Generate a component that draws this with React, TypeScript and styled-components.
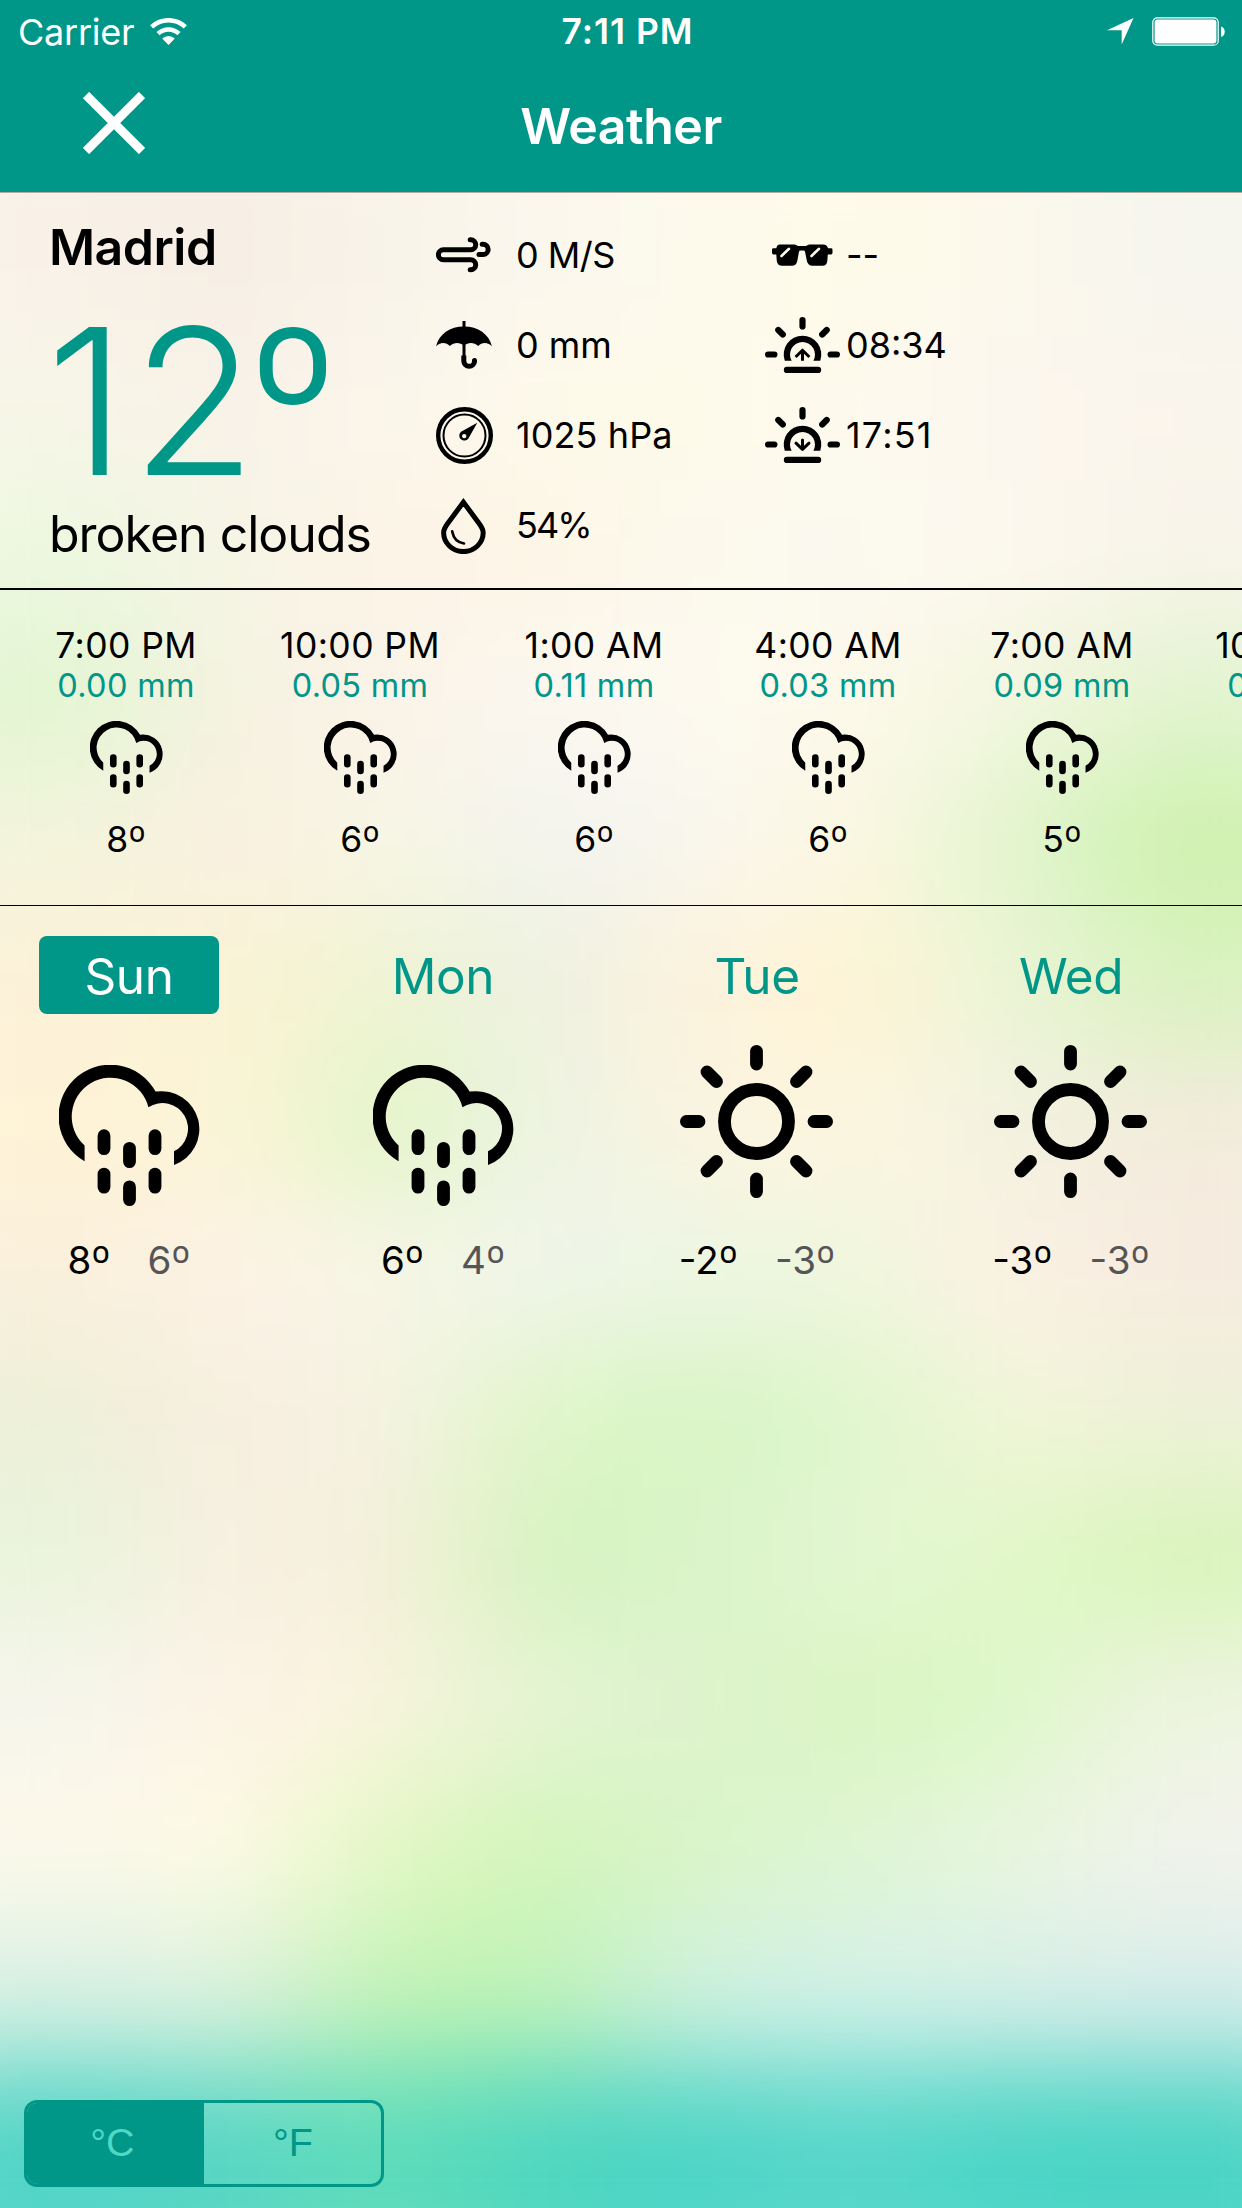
import React from "react";
import styled, { createGlobalStyle } from "styled-components";

const TEAL = "#009688";

const GlobalStyle = createGlobalStyle`
  * { box-sizing: border-box; }
  html, body { margin: 0; padding: 0; }
  body { font-family: Inter, "Liberation Sans", sans-serif; color: #000; }
`;

const Screen = styled.div`
  position: relative;
  width: 1242px;
  height: 2208px;
  overflow: hidden;
  display: flex;
  flex-direction: column;
  isolation: isolate;
`;

/* Soft, out-of-focus backdrop */
const Backdrop = styled.div`
  position: absolute;
  inset: 92px -100px -100px -100px;
  z-index: -1;
  display: flex;
  flex-direction: column;
  filter: blur(54px);
`;

const Band = styled.div<{ $colors: string[] }>`
  flex: 0 0 144px;
  background: linear-gradient(
    90deg,
    ${(p) => p.$colors.map((c, i) => `${c} ${178 + i * 155}px`).join(", ")}
  );
  &:first-child { flex-basis: 244px; }
  &:last-child { flex-basis: 244px; }
`;

const bands = [
  "#f9f1e8 #f6eee4 #f8f4e9 #fbf7ee #fdfaec #fefbe9 #fcf8ec #f6f5ee",
  "#f7f6e8 #f9f1e8 #fbf6ec #fdfaea #fefaea #fdfaee #fcf7ee #fbf5ec",
  "#edf7e0 #f6f5e6 #fcf3e6 #fdf6e6 #fcf9ec #fbf9f0 #fdf8ee #f8f4ea",
  "#e2f6d2 #f6f2e2 #fbf3e8 #fbf7f0 #fdfaf0 #fdf9ea #f4f6e0 #e2f4d0",
  "#f3f4dc #faf0e0 #f7f6e4 #f3f3ee #f8f6ee #fdf8e2 #e2f5d0 #cef2ae",
  "#fcf1d8 #fbf3d4 #eef4d2 #edf1e2 #fdf2dc #fff4d4 #ebf5d8 #daf2c0",
  "#fef3d6 #fcf4d8 #e0f6c6 #eef3e4 #faf4e0 #fdf6e0 #f2f2e0 #f3ebdc",
  "#faf0dc #fdf2e6 #f7f6e6 #f0f5ea #ecf6e4 #f0f7dc #fcf1e4 #f6ece0",
  "#edf0d8 #f8eee0 #f5f3e2 #dff6c8 #d8f5c4 #def6ce #f2f6d8 #eef1d8",
  "#eaf4dc #f8f0e2 #f5f0da #d4f3be #daf4c8 #e4f6d4 #e2f8c8 #d8f5ba",
  "#f6f5ec #fef3e6 #f8f4dc #e4f4d4 #def3ce #daf5c0 #dcf8c8 #eef4e0",
  "#fdf9ea #fefae4 #e4f8c4 #d2f5ba #daf5c8 #dff5d4 #e8f6de #f2f3ec",
  "#daf1e4 #def2de #c2f3b4 #bef3b6 #d2f0e2 #d4f2e8 #d8efe8 #d8edea",
  "#50d4c6 #58d6c4 #5eddb8 #4ed6c0 #4cd4c6 #58d7ca #4ad5c6 #4ad4c4",
].map((row) => row.split(" "));

const Header = styled.header`
  flex: none;
  height: 193px;
  background: ${TEAL};
  border-bottom: 1px solid #b3aaa0;
  color: #fff;
`;

const StatusBar = styled.div`
  height: 60px;
  padding: 2px 17px 0 18px;
  display: grid;
  grid-template-columns: 1fr auto 1fr;
  align-items: center;
  font-size: 36px;
  line-height: 58px;
`;

const StatusSide = styled.div<{ $end?: boolean }>`
  display: flex;
  align-items: center;
  justify-content: ${(p) => (p.$end ? "flex-end" : "flex-start")};
  gap: ${(p) => (p.$end ? 18 : 16)}px;
`;

const Carrier = styled.span`
  letter-spacing: -0.25px;
`;

const Clock = styled.span`
  padding: 1px 0 0 12px;
  font-size: 35.5px;
  font-weight: 600;
  letter-spacing: 1px;
`;

const NavBar = styled.div`
  height: 132px;
  padding-left: 83px;
  display: grid;
  grid-template-columns: 62px 1fr 145px;
  align-items: center;
`;

const CloseButton = styled.button`
  width: 62px;
  height: 62px;
  margin-top: -6px;
  padding: 0;
  border: 0;
  background: none;
  color: inherit;
  display: flex;
`;

const Title = styled.h1`
  margin: 0;
  text-align: center;
  font-size: 50px;
  font-weight: 600;
  line-height: 60px;
  letter-spacing: -0.5px;
`;

const Current = styled.section`
  flex: none;
  height: 397px;
  border-bottom: 2px solid #000;
  padding: 17px 0 0 49px;
  display: flex;
`;

const Summary = styled.div`
  width: 377px;
  padding-top: 7px;
  display: flex;
  flex-direction: column;
  white-space: nowrap;
`;

const City = styled.h2`
  margin: 0;
  font-size: 50px;
  font-weight: 600;
  line-height: 60px;
  letter-spacing: -0.5px;
`;

const BigTemp = styled.div`
  margin: 21px 0 0 -3px;
  font-size: 204px;
  font-weight: 345;
  line-height: 206px;
  letter-spacing: 5px;
  color: ${TEAL};
`;

const BigDegree = styled.span`
  margin-left: -12px;
  font-size: 202px;
  font-weight: 275;
  line-height: 0;
  vertical-align: 2px;
`;

const Degree = styled.span`
  font-size: 1.16em;
  font-weight: 330;
  line-height: 0;
  vertical-align: -0.1em;
`;

const Condition = styled.div`
  font-size: 50px;
  line-height: 60px;
  letter-spacing: -1px;
`;

const MetricColumn = styled.div<{ $gap: number }>`
  width: 338px;
  display: grid;
  grid-auto-rows: 90px;
  align-content: start;
  --gap: ${(p) => p.$gap}px;
`;

const Metric = styled.div<{ $tracking?: number }>`
  display: grid;
  grid-template-columns: 76px auto;
  column-gap: var(--gap);
  align-items: center;
  justify-content: start;
  font-size: 36px;
  font-weight: 375;
  letter-spacing: ${(p) => p.$tracking ?? 0}px;
  white-space: nowrap;
`;

const MetricIcon = styled.span`
  display: flex;
  justify-content: center;
`;

const Hourly = styled.section`
  flex: none;
  height: 316px;
  border-bottom: 1px solid #000;
  padding: 37px 0 0 9px;
  display: flex;
`;

const Hour = styled.div`
  flex: 0 0 234px;
  display: flex;
  flex-direction: column;
  align-items: center;
  font-weight: 375;
  white-space: nowrap;
`;

const HourTime = styled.div`
  font-size: 35.5px;
  line-height: 37px;
  letter-spacing: 0.4px;
`;

const HourRain = styled.div`
  margin-top: 1px;
  font-size: 32.5px;
  line-height: 42px;
  letter-spacing: 0.3px;
  color: ${TEAL};
`;

const HourIcon = styled.div`
  margin-top: 14px;
  height: 73px;
`;

const HourTemp = styled.div`
  margin-top: 26px;
  font-size: 35.5px;
  line-height: 40px;
`;

const Daily = styled.section`
  flex: none;
  padding: 30px 0 0 39px;
  display: flex;
  gap: 134px;
`;

const Day = styled.div`
  flex: 0 0 180px;
  display: flex;
  flex-direction: column;
  align-items: center;
`;

const DayName = styled.button<{ $active?: boolean }>`
  width: 180px;
  height: 78px;
  padding: 0;
  border: 0;
  border-radius: 8px;
  background: ${(p) => (p.$active ? TEAL : "transparent")};
  color: ${(p) => (p.$active ? "#fff" : TEAL)};
  font: 400 49.5px/80px Inter, sans-serif;
  letter-spacing: -0.4px;
`;

const DayIcon = styled.div<{ $low?: boolean }>`
  height: 214px;
  padding: ${(p) => (p.$low ? "28px 0 0" : "0 1px 0 0")};
  display: flex;
  align-items: center;
  justify-content: center;
`;

const Range = styled.div`
  display: flex;
  gap: 37px;
  font-size: 38.5px;
  line-height: 64px;
  white-space: nowrap;
`;

const Low = styled.span`
  color: #555;
`;

const Footer = styled.footer`
  margin-top: auto;
  padding: 0 0 21px 24px;
`;

const Segmented = styled.div`
  width: 360px;
  height: 87px;
  border: 3px solid ${TEAL};
  border-radius: 13px;
  overflow: hidden;
  display: flex;
`;

const Segment = styled.button<{ $on?: boolean }>`
  flex: 0 0 177px;
  padding: ${(p) => (p.$on ? "0 6px 2px 0" : "0 0 2px 1px")};
  border: 0;
  background: ${(p) => (p.$on ? TEAL : "transparent")};
  color: ${(p) => (p.$on ? "#50d8c4" : TEAL)};
  font: 400 39.5px/79px "Liberation Sans", Arial, sans-serif;
`;

const Rain = ({ size }: { size: number }) => (
  <svg width={size} height={size} viewBox="0 0 141 141">
    <path d="M25.6 96.3A51.7 51.7 0 1 1 96.6 26.6A37.95 37.95 0 0 1 115 99.9V86.3A25.5 25.5 0 1 0 89.4 42.3A38.9 38.9 0 1 0 25.6 80.5Z" />
    <path
      d="M45 70.7V83.6M45 109.1V122.1M70.5 83.4V96.6M70.5 121.9V134.6M96 70.7V83.6M96 109.1V122.1"
      stroke="#000"
      strokeWidth="12.8"
      strokeLinecap="round"
    />
  </svg>
);

const Sun = () => (
  <svg width="153" height="153" viewBox="0 0 153 153" fill="none" stroke="#000" strokeWidth="12.8" strokeLinecap="round">
    <circle cx="76.5" cy="76.5" r="32" />
    <path d="M76.5 6.4V19M76.5 134V146.6M6.4 76.5H19M134 76.5H146.6M27 27l9.5 9.5M126 27l-9.5 9.5M27 126l9.5-9.5M126 126l-9.5-9.5" />
  </svg>
);

const Horizon = ({ rising }: { rising?: boolean }) => (
  <svg width="75" height="56" viewBox="0 0 75 56" fill="none" stroke="#000" strokeLinecap="round">
    <path d="M19.75 43.7A18.8 18.8 0 1 1 55.25 43.7H48.35A12.5 12.5 0 1 0 26.65 43.7Z" fill="#000" stroke="none" />
    <path d="M37.5 3.1V9.4M3.1 37.5H9.4M65.6 37.5H71.9M13.3 13L17.8 17.5M61.7 13L57.2 17.5M21.9 52.9H53.1" strokeWidth="6.2" />
    {rising ? (
      <path d="M37.5 43.7V34M30.6 40L37.5 33.2L44.4 40" strokeWidth="3" strokeLinecap="butt" strokeLinejoin="round" />
    ) : (
      <path d="M37.5 33V42M31 36.2L37.5 42.3L44 36.2" strokeWidth="3" strokeLinejoin="round" />
    )}
  </svg>
);

const Wind = () => (
  <svg width="56" height="36" viewBox="0 0 56 36" fill="none" stroke="#000" strokeWidth="5" strokeLinecap="round">
    <path d="M34.2 2.7h.5a5 5 0 0 1 0 10H7.4a5 5 0 0 0 0 10H34.7a5 5 0 0 1 0 10h-.5" />
    <path d="M46.2 7.3h.8a5.15 5.15 0 0 1 0 10.3H43" />
  </svg>
);

const Umbrella = () => (
  <svg width="56" height="48" viewBox="0 0 56 48" fill="none" stroke="#000">
    <path d="M0 25.5C3 13 14 5.5 28 5.5S53 13 56 25.5C53 21.5 46 20.5 42.2 25C38 21 32 21.3 28 24.5C24 21.3 18 21 13.8 25C10 20.5 3 21.5 0 25.5Z" fill="#000" stroke="none" />
    <path d="M28 0V37" strokeWidth="3" />
    <path d="M27.8 34.5V40a5.35 5.35 0 0 0 10.7 0v-.4" strokeWidth="5" />
    <circle cx="38.5" cy="39.5" r="2.5" fill="#000" stroke="none" />
  </svg>
);

const Gauge = () => (
  <svg width="57" height="57" viewBox="0 0 57 57" fill="none" stroke="#000">
    <circle cx="28.5" cy="28.5" r="26.3" strokeWidth="4.4" />
    <circle cx="28.5" cy="28.5" r="21" strokeWidth="2" />
    <path d="M41.3 15.8L32.4 31.4A5 5 0 1 1 25 24.8Z M28.2 26.9a2.2 2.2 0 1 0 .01 0Z" fill="#000" fillRule="evenodd" stroke="none" />
  </svg>
);

const Drop = () => (
  <svg width="47" height="57" viewBox="0 0 47 57" fill="none" stroke="#000">
    <path d="M22.4 5.2L7.6 25.2C4.6 29.4 2.6 32 2.6 35.6A19.8 19 0 0 0 42.2 35.6C42.2 32 40.2 29.4 37.2 25.2Z" strokeWidth="5" />
    <path d="M22.4 2L17 10H28Z" fill="#000" stroke="none" />
    <path d="M11.2 34.4C12.5 41.5 17 45.5 23 46.5" strokeWidth="2.7" strokeLinecap="round" />
  </svg>
);

const Sunglasses = () => (
  <svg width="61" height="22" viewBox="0 0 61 22">
    <path d="M8 .5H21C23.5 .5 25 1.2 26 2H34C35 1.2 36.5.5 39 .5H51C54 .5 55.5 2 56 4.3H59.5Q60.5 4.5 60.5 6V8.8Q60.5 10.5 59 10.5H55.8L55.3 17C55 20 53.5 21.7 50.5 21.7H40.5C37.5 21.7 35.6 20 34.9 17L33 7.5Q32.6 6.5 31.5 6.5H28.5Q27.4 6.5 27 7.5L25.3 17C24.7 20 23 21.7 20 21.7H10C7 21.7 5.2 20 4.8 17L4.3 10.5H1.5Q0 10.5 0 8.8V6Q0 4.5 1 4.3H4.3C5 2 5.5 .5 8 .5Z" />
    <path d="M9.5 12L17 4.8M39.5 12L47 4.8" stroke="#fdfaec" strokeWidth="2.6" strokeLinecap="round" />
  </svg>
);

const Wifi = () => (
  <svg width="37" height="27" viewBox="0 0 37 27" fill="none" stroke="#fff">
    <path d="M1.65 8.94A24.6 24.6 0 0 1 35.35 8.94" strokeWidth="4.6" />
    <path d="M8 15.7A15.4 15.4 0 0 1 29 15.7" strokeWidth="4.4" />
    <path d="M18.5 27L12.2 20.6A9 9 0 0 1 24.8 20.6Z" fill="#fff" stroke="none" />
  </svg>
);

const Locate = () => (
  <svg width="27" height="27" viewBox="0 0 27 27">
    <path d="M26.5 0L14.7 26.5V12.2H0Z" fill="#fff" />
  </svg>
);

const Battery = () => (
  <svg width="73" height="29" viewBox="0 0 73 29">
    <rect x=".8" y=".8" width="65.4" height="27.4" rx="4.5" fill="none" stroke="#fff" strokeWidth="1.2" />
    <rect x="2.6" y="2.4" width="61.8" height="24.2" rx="3" fill="#fff" />
    <path d="M69 9.5C74 10.5 74 19 69 20Z" fill="#fff" />
  </svg>
);

const Close = () => (
  <svg width="62" height="62" viewBox="0 0 62 62">
    <path d="M3 3L59 59M59 3L3 59" stroke="#fff" strokeWidth="8.8" />
  </svg>
);

const hours = [
  ["7:00 PM", "0.00 mm", "8"],
  ["10:00 PM", "0.05 mm", "6"],
  ["1:00 AM", "0.11 mm", "6"],
  ["4:00 AM", "0.03 mm", "6"],
  ["7:00 AM", "0.09 mm", "5"],
  ["10:00 AM", "0.00 mm", "5"],
];

const days = [
  { name: "Sun", rain: true, high: "8", low: "6" },
  { name: "Mon", rain: true, high: "6", low: "4" },
  { name: "Tue", rain: false, high: "-2", low: "-3" },
  { name: "Wed", rain: false, high: "-3", low: "-3" },
];

const conditions = [
  { icon: <Wind />, value: "0 M/S", tracking: -0.5 },
  { icon: <Umbrella />, value: "0 mm", tracking: 0 },
  { icon: <Gauge />, value: "1025 hPa", tracking: 0.1 },
  { icon: <Drop />, value: "54%", tracking: -1.9 },
];

const sunTimes = [
  { icon: <Sunglasses />, value: "--", tracking: 0 },
  { icon: <Horizon rising />, value: "08:34", tracking: 0 },
  { icon: <Horizon />, value: "17:51", tracking: 1.2 },
];

export default function App() {
  return (
    <Screen>
      <GlobalStyle />
      <Backdrop>
        {bands.map((colors, i) => (
          <Band key={i} $colors={colors} />
        ))}
      </Backdrop>

      <Header>
        <StatusBar>
          <StatusSide>
            <Carrier>Carrier</Carrier>
            <Wifi />
          </StatusSide>
          <Clock>7:11 PM</Clock>
          <StatusSide $end>
            <Locate />
            <Battery />
          </StatusSide>
        </StatusBar>
        <NavBar>
          <CloseButton aria-label="Close">
            <Close />
          </CloseButton>
          <Title>Weather</Title>
        </NavBar>
      </Header>

      <Current>
        <Summary>
          <City>Madrid</City>
          <BigTemp>
            12<BigDegree>º</BigDegree>
          </BigTemp>
          <Condition>broken clouds</Condition>
        </Summary>
        <MetricColumn $gap={14}>
          {conditions.map((m) => (
            <Metric key={m.value} $tracking={m.tracking}>
              <MetricIcon>{m.icon}</MetricIcon>
              {m.value}
            </Metric>
          ))}
        </MetricColumn>
        <MetricColumn $gap={6}>
          {sunTimes.map((m) => (
            <Metric key={m.value} $tracking={m.tracking}>
              <MetricIcon>{m.icon}</MetricIcon>
              {m.value}
            </Metric>
          ))}
        </MetricColumn>
      </Current>

      <Hourly>
        {hours.map(([time, rain, temp]) => (
          <Hour key={time}>
            <HourTime>{time}</HourTime>
            <HourRain>{rain}</HourRain>
            <HourIcon>
              <Rain size={73} />
            </HourIcon>
            <HourTemp>
              {temp}
              <Degree>º</Degree>
            </HourTemp>
          </Hour>
        ))}
      </Hourly>

      <Daily>
        {days.map((d, i) => (
          <Day key={d.name}>
            <DayName $active={i === 0}>{d.name}</DayName>
            <DayIcon $low={d.rain}>{d.rain ? <Rain size={141} /> : <Sun />}</DayIcon>
            <Range>
              <span>
                {d.high}
                <Degree>º</Degree>
              </span>
              <Low>
                {d.low}
                <Degree>º</Degree>
              </Low>
            </Range>
          </Day>
        ))}
      </Daily>

      <Footer>
        <Segmented>
          <Segment $on>°C</Segment>
          <Segment>°F</Segment>
        </Segmented>
      </Footer>
    </Screen>
  );
}
